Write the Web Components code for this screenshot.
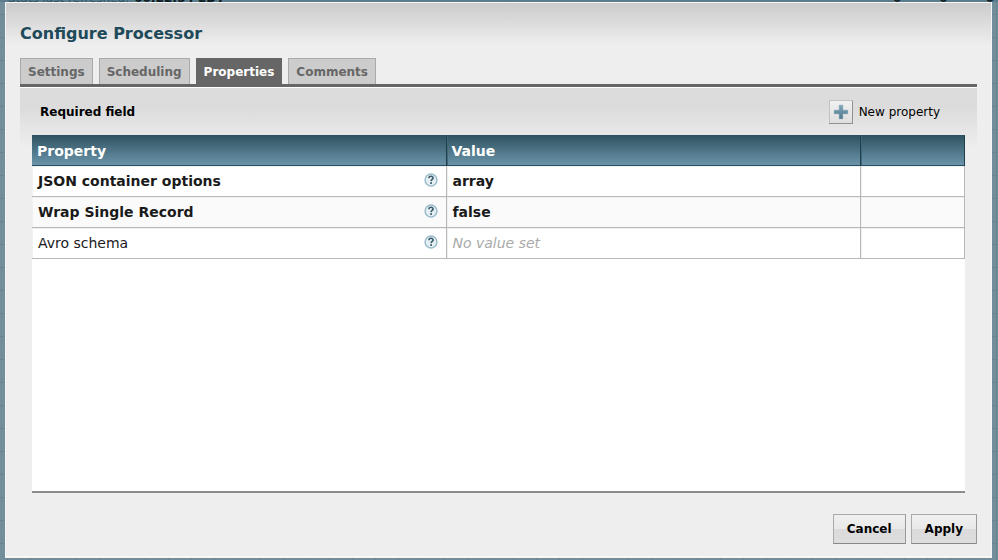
<!DOCTYPE html>
<html lang="en">
<head>
<meta charset="utf-8">
<title>Configure Processor</title>
<style>
  html, body {
    margin: 0;
    height: 100%;
  }
  body {
    font-family: Verdana, "DejaVu Sans", sans-serif;
    font-size: 12px;
    color: #000;
    overflow: hidden;
  }
</style>
</head>
<body>
<flow-canvas>
  <processor-dialog heading="Configure Processor">
    <tab-bar slot="tabs">
      <tab-item>Settings</tab-item>
      <tab-item>Scheduling</tab-item>
      <tab-item selected>Properties</tab-item>
      <tab-item>Comments</tab-item>
    </tab-bar>
    <property-panel></property-panel>
    <dialog-button slot="buttons">Cancel</dialog-button>
    <dialog-button slot="buttons">Apply</dialog-button>
  </processor-dialog>
</flow-canvas>

<script>
function define(name, html, setup) {
  const template = document.createElement('template');
  template.innerHTML = html;

  customElements.define(name, class extends HTMLElement {
    constructor() {
      super();
      this.attachShadow({ mode: 'open' });
      this.shadowRoot.appendChild(template.content.cloneNode(true));
    }

    connectedCallback() {
      if (setup) setup(this, this.shadowRoot);
    }
  });
}

define('flow-canvas', `
  <style>
    :host {
      position: relative;
      display: flex;
      box-sizing: border-box;
      height: 100%;
      padding: 2px 6px 2px 5px;
      background-color: #728e9b;
      background-image:
        linear-gradient(#5b7c8c, #5b7c8c),
        linear-gradient(transparent 22px, #69838f 22px),
        linear-gradient(90deg, transparent 22px, #69838f 22px);
      background-size: 100% 2px, 100% 23px, 23px 100%;
      background-position: 0 0, 0 -8px, 8px 0;
      background-repeat: no-repeat, repeat, repeat;
    }
    /* status strip, mostly scrolled out above the dialog */
    .status {
      position: absolute;
      top: -9px;
      left: 8px;
      right: 4px;
      display: flex;
      gap: 5px;
      font-size: 12px;
      line-height: 14px;
      color: #2f5565;
    }
    .status b {
      color: #0d1a20;
    }
    .status .counts {
      display: flex;
      gap: 38px;
      margin-left: auto;
    }
    ::slotted(*) {
      position: relative;
    }
  </style>
  <div class="status">
    <span>Stats last refreshed:</span><b>00:22:54 EDT</b>
    <span class="counts"><b>0</b><b>0</b><b>0</b></span>
  </div>
  <slot></slot>
`);

define('processor-dialog', `
  <style>
    :host {
      flex: 1;
      display: flex;
      flex-direction: column;
      box-sizing: border-box;
      min-width: 0;
      border: 1px solid #f4f5f5;
      border-bottom: 2px solid #f8f6f3;
      padding: 20px 14px 12px 14px;
      background: #eee linear-gradient(#cbcbcb, #eee 42px) no-repeat;
    }
    h1 {
      margin: 0 0 13px;
      font-size: 16px;
      line-height: 22px;
      color: #1e4a5a;
    }
    footer {
      display: flex;
      justify-content: flex-end;
      gap: 5px;
      margin-top: 21px;
    }
  </style>
  <h1></h1>
  <slot name="tabs"></slot>
  <slot></slot>
  <footer><slot name="buttons"></slot></footer>
`, (host, root) => {
  root.querySelector('h1').textContent = host.getAttribute('heading');
});

define('tab-bar', `
  <style>
    :host {
      display: flex;
      gap: 6px;
      border-bottom: 3px solid #666;
    }
  </style>
  <slot></slot>
`, (host) => host.setAttribute('role', 'tablist'));

define('tab-item', `
  <style>
    :host {
      display: block;
    }
    button {
      display: block;
      height: 26px;
      padding: 0 7px;
      border: 1px solid #aaa;
      border-bottom: 0;
      background: #ccc;
      color: #666;
      font: bold 12px/26px Verdana, "DejaVu Sans", sans-serif;
    }
    :host([selected]) button {
      border-color: #666;
      background: #666;
      color: #fff;
    }
  </style>
  <button type="button" role="tab"><slot></slot></button>
`, (host, root) => {
  root.querySelector('button').setAttribute('aria-selected', host.hasAttribute('selected'));
});

define('property-panel', `
  <style>
    :host {
      flex: 1;
      display: flex;
      flex-direction: column;
      padding: 0 12px;
      border-top: 1px solid #fff;
      background: linear-gradient(#dcdcdc 20px, #eee 60px) no-repeat;
    }
    .bar {
      display: flex;
      align-items: center;
      justify-content: space-between;
      height: 47px;
      padding: 0 25px 0 8px;
    }
    .bar span {
      font-size: 12px;
      font-weight: bold;
    }
    .new {
      display: flex;
      align-items: center;
      gap: 6px;
      padding: 0;
      border: 0;
      background: none;
      color: #000;
      font: 12px/16px Verdana, "DejaVu Sans", sans-serif;
    }
    property-table {
      flex: 1;
    }
  </style>
  <div class="bar">
    <span>Required field</span>
    <button class="new" type="button">
      <svg width="24" height="24" viewBox="0 0 24 24" aria-hidden="true">
        <defs>
          <linearGradient id="face" x2="0" y2="1">
            <stop offset="0" stop-color="#f1f1f1"/>
            <stop offset="1" stop-color="#dedede"/>
          </linearGradient>
          <linearGradient id="plus" x2="0" y2="1">
            <stop offset="0" stop-color="#83a6b8"/>
            <stop offset="1" stop-color="#4f788c"/>
          </linearGradient>
        </defs>
        <rect x=".5" y=".5" width="23" height="23" fill="url(#face)" stroke="#c2c2c2"/>
        <path d="M0 23.500h24M23.500 1v23" stroke="#929292"/>
        <path d="M10 5h4v5h5v4h-5v5h-4v-5h-5v-4h5z" fill="url(#plus)" stroke="#a9c2cf" stroke-width=".5"/>
      </svg>
      New property
    </button>
  </div>
  <property-table></property-table>
`);

define('property-table', `
  <style>
    :host {
      display: block;
      background: #fff;
      border-bottom: 2px solid #8c8c8c;
    }
    table {
      width: 100%;
      table-layout: fixed;
      border-collapse: separate;
      border-spacing: 0;
      font-size: 14px;
    }
    .action {
      width: 104px;
    }
    th, td {
      box-sizing: border-box;
      height: 31px;
      text-align: left;
      white-space: nowrap;
    }
    th {
      padding: 0 5px;
      border-top: 1px solid #2b5361;
      border-right: 1px solid #1f3f4b;
      border-bottom: 1px solid #24505f;
      background: linear-gradient(#305462, #6b94aa);
      color: #fff;
    }
    th + th {
      box-shadow: inset 1px 0 #416878;
    }
    td {
      padding: 0 6px;
      border-right: 1px solid #b8b8b8;
      border-bottom: 1px solid #b8b8b8;
      color: #1a1a1a;
      box-shadow: inset 1px 1px #f0f0f0;
    }
    tr:nth-child(even) td {
      background: #fafafa;
    }
    .required td {
      font-weight: bold;
    }
    .name {
      display: flex;
      align-items: center;
      justify-content: space-between;
    }
    .unset {
      color: #aaa;
      font-style: italic;
    }
  </style>
  <table>
    <colgroup><col><col><col class="action"></colgroup>
    <thead><tr><th scope="col">Property</th><th scope="col">Value</th><th></th></tr></thead>
    <tbody></tbody>
  </table>
`, (host, root) => {
  const properties = [
    { name: 'JSON container options', value: 'array', required: true },
    { name: 'Wrap Single Record', value: 'false', required: true },
    { name: 'Avro schema' },
  ];

  root.querySelector('tbody').innerHTML = properties.map((p) => `
    <tr class="${p.required ? 'required' : ''}">
      <td><div class="name">${p.name}<help-icon></help-icon></div></td>
      <td class="${p.value ? '' : 'unset'}">${p.value || 'No value set'}</td>
      <td></td>
    </tr>`).join('');
});

define('help-icon', `
  <style>
    :host {
      display: block;
      height: 16px;
    }
    svg {
      display: block;
    }
  </style>
  <svg width="17" height="14" viewBox="0 0 17 14" role="img" aria-label="Help">
    <circle cx="8" cy="7" r="5.900" fill="#e6f0f4" stroke="#9abccc" stroke-width="1.500"/>
    <path d="M5.900 5.200c.1-2.600 4.400-2.400 4.200-.1-.1 1.400-1.900 1.300-2 3" fill="none" stroke="#3d5b6a" stroke-width="1.600"/>
    <rect x="7.200" y="9.200" width="1.800" height="1.700" fill="#3d5b6a"/>
  </svg>
`);

define('dialog-button', `
  <style>
    :host {
      display: block;
    }
    button {
      display: block;
      box-sizing: border-box;
      height: 30px;
      padding: 0 13px;
      border: 1px solid #aaa;
      border-right-color: #999;
      border-bottom-color: #888;
      background: linear-gradient(#efefef, #e8e8e8 50%, #dadada 50%, #dedede);
      color: #000;
      font: bold 12px/28px Verdana, "DejaVu Sans", sans-serif;
    }
  </style>
  <button type="button"><slot></slot></button>
`);
</script>
</body>
</html>
